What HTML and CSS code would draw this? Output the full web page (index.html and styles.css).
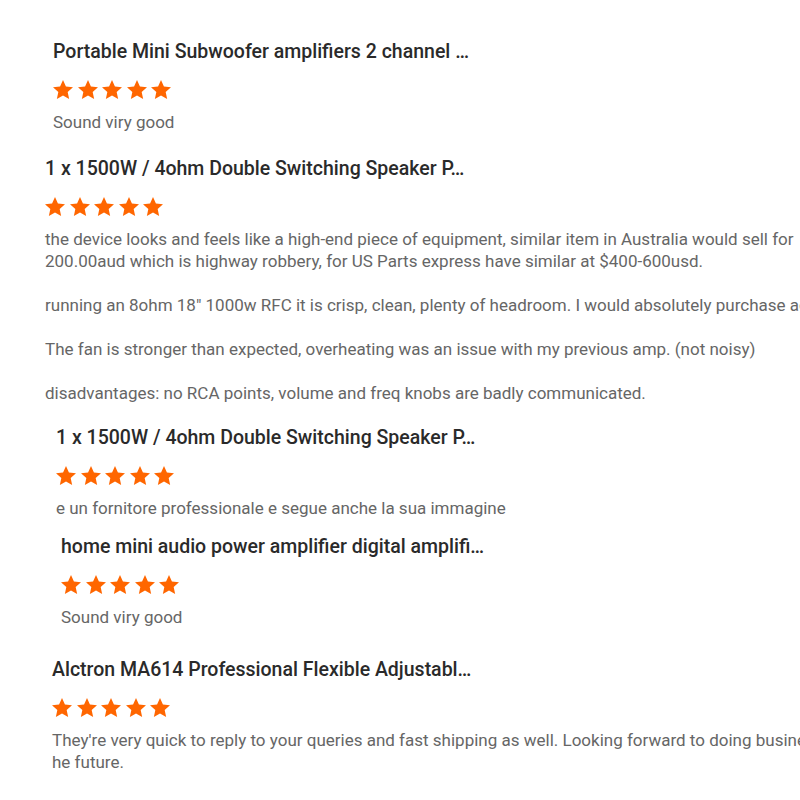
FILE: index.html
```html
<!DOCTYPE html>
<html lang="en">
<head>
<meta charset="utf-8">
<title>Reviews</title>
<link rel="stylesheet" href="styles.css">
</head>
<body>
<svg width="0" height="0" class="defs" aria-hidden="true">
  <defs>
    <symbol id="star" viewBox="0 0 24 24">
      <polygon points="12,1.2 15.2,8.3 22.9,9.1 17.1,14.3 18.7,21.9 12,18 5.3,21.9 6.9,14.3 1.1,9.1 8.8,8.3"/>
    </symbol>
  </defs>
</svg>
<main class="reviews">
  <article class="review review--a">
    <h3 class="review__title">Portable Mini Subwoofer amplifiers 2 channel …</h3>
    <div class="stars"><svg><use href="#star"/></svg><svg><use href="#star"/></svg><svg><use href="#star"/></svg><svg><use href="#star"/></svg><svg><use href="#star"/></svg></div>
    <p class="review__text">Sound viry good</p>
  </article>
  <article class="review review--b">
    <h3 class="review__title">1 x 1500W / 4ohm Double Switching Speaker P…</h3>
    <div class="stars"><svg><use href="#star"/></svg><svg><use href="#star"/></svg><svg><use href="#star"/></svg><svg><use href="#star"/></svg><svg><use href="#star"/></svg></div>
    <p class="review__text">the device looks and feels like a high-end piece of equipment, similar item in Australia would sell for<br>200.00aud which is highway robbery, for US Parts express have similar at $400-600usd.<br><br>running an 8ohm 18" 1000w RFC it is crisp, clean, plenty of headroom. I would absolutely purchase again<br><br>The fan is stronger than expected, overheating was an issue with my previous amp. (not noisy)<br><br>disadvantages: no RCA points, volume and freq knobs are badly communicated.</p>
  </article>
  <article class="review review--c">
    <h3 class="review__title">1 x 1500W / 4ohm Double Switching Speaker P…</h3>
    <div class="stars"><svg><use href="#star"/></svg><svg><use href="#star"/></svg><svg><use href="#star"/></svg><svg><use href="#star"/></svg><svg><use href="#star"/></svg></div>
    <p class="review__text">e un fornitore professionale e segue anche la sua immagine</p>
  </article>
  <article class="review review--d">
    <h3 class="review__title">home mini audio power amplifier digital amplifi…</h3>
    <div class="stars"><svg><use href="#star"/></svg><svg><use href="#star"/></svg><svg><use href="#star"/></svg><svg><use href="#star"/></svg><svg><use href="#star"/></svg></div>
    <p class="review__text">Sound viry good</p>
  </article>
  <article class="review review--e">
    <h3 class="review__title">Alctron MA614 Professional Flexible Adjustabl…</h3>
    <div class="stars"><svg><use href="#star"/></svg><svg><use href="#star"/></svg><svg><use href="#star"/></svg><svg><use href="#star"/></svg><svg><use href="#star"/></svg></div>
    <p class="review__text">They're very quick to reply to your queries and fast shipping as well. Looking forward to doing business with you in t<br>he future.</p>
  </article>
</main>
</body>
</html>
```
FILE: styles.css
```css
html, body {
  margin: 0;
  padding: 0;
  overflow: hidden;
  background: #fff;
}
body {
  font-family: Roboto, "Liberation Sans", Arial, sans-serif;
  width: 800px;
  height: 800px;
}
.defs { position: absolute; }
.reviews {
  display: flex;
  flex-direction: column;
  padding-top: 40px;
}
.review {
  display: flex;
  flex-direction: column;
  white-space: nowrap;
}
.review--a { margin-left: 53px; }
.review--b { margin-left: 45px; margin-top: 24px; }
.review--c { margin-left: 56px; margin-top: 22px; }
.review--d { margin-left: 61px; margin-top: 16px; }
.review--e { margin-left: 52px; margin-top: 30px; }
.review__title {
  margin: 0;
  font-size: 19.5px;
  font-weight: 500;
  line-height: 24px;
  color: #2a2a2a;
}
.stars {
  display: flex;
  gap: 2.6px;
  margin-top: 15px;
  margin-left: -1px;
}
.stars svg {
  width: 22px;
  height: 22px;
  fill: #ff6600;
}
.review__text {
  margin: 10px 0 0;
  font-size: 17px;
  line-height: 22px;
  color: #666;
}
```
